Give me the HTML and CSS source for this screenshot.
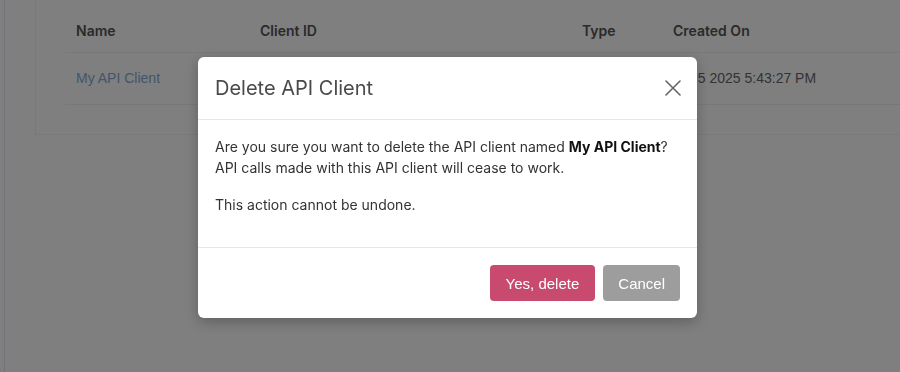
FILE: index.html
```html
<!DOCTYPE html>
<html lang="en">
<head>
<meta charset="utf-8">
<title>Delete API Client</title>
<link rel="stylesheet" href="styles.css">
</head>
<body>
<div class="app">
  <aside class="sidebar"></aside>
  <main class="content">
    <section class="card">
      <table class="clients">
        <colgroup>
          <col class="c-name"><col class="c-id"><col class="c-type"><col>
        </colgroup>
        <thead>
          <tr><th>Name</th><th>Client ID</th><th>Type</th><th>Created On</th></tr>
        </thead>
        <tbody>
          <tr>
            <td><a class="link" href="#">My API Client</a></td>
            <td></td>
            <td></td>
            <td class="date">Aug 5 2025 5:43:27 PM</td>
          </tr>
        </tbody>
      </table>
    </section>
  </main>
</div>

<div class="overlay">
  <div class="modal" role="dialog" aria-labelledby="modal-title">
    <header class="modal-header">
      <h2 id="modal-title" class="modal-title">Delete API Client</h2>
      <button class="close" aria-label="Close">
        <svg width="16" height="16" viewBox="0 0 16 16" aria-hidden="true">
          <path d="M1 1 L15 15 M15 1 L1 15" stroke="#666" stroke-width="1.6" fill="none" stroke-linecap="round"/>
        </svg>
      </button>
    </header>
    <div class="modal-body">
      <p>Are you sure you want to delete the API client named <strong>My API Client</strong>? API calls made with this API client will cease to work.</p>
      <p>This action cannot be undone.</p>
    </div>
    <footer class="modal-footer">
      <button class="btn btn-danger">Yes, delete</button>
      <button class="btn btn-cancel">Cancel</button>
    </footer>
  </div>
</div>
</body>
</html>
```

FILE: styles.css
```css
* { box-sizing: border-box; }

html, body {
  margin: 0;
  height: 100%;
  background: #ffffff;
  font-family: Inter, "Noto Sans", "Liberation Sans", sans-serif;
  color: #333;
  overflow: hidden;
}

.app {
  display: flex;
  height: 100%;
}

.sidebar {
  width: 5px;
  flex: none;
  border-right: 1px solid #e6e6f6;
}

.content {
  flex: 1;
  padding-left: 30px;
}

.card {
  border: 1px solid #f2f2f2;
  border-top: none;
  border-right: none;
  padding: 10px 0 29px 29px;
}

.clients {
  width: 100%;
  border-collapse: collapse;
  font-size: 14px;
}

.c-name { width: 184px; }
.c-id { width: 322px; }
.c-type { width: 91px; }

.clients th {
  text-align: left;
  font-weight: 600;
  color: #555;
  padding: 0 11px;
  height: 42px;
  border-bottom: 1px solid #f0f0f0;
}

.clients td {
  padding: 0 11px;
  height: 52px;
  border-bottom: 1px solid #f0f0f0;
  font-family: "Liberation Sans", Arial, sans-serif;
  color: #666;
  font-size: 14px;
  white-space: nowrap;
}

.clients .date { padding-left: 7px; }

.link {
  color: #86aad6;
  text-decoration: none;
}

.overlay {
  position: fixed;
  inset: 0;
  background: rgba(0, 0, 0, 0.5);
  display: flex;
  align-items: flex-start;
}

.modal {
  margin: 57px 0 0 198px;
  width: 499px;
  background: #fff;
  border-radius: 6px;
  box-shadow: 0 4px 14px rgba(0, 0, 0, 0.25);
}

.modal-header {
  height: 63px;
  padding: 0 16px 0 17px;
  display: flex;
  align-items: center;
  justify-content: space-between;
  border-bottom: 1px solid #e6e6e6;
}

.modal-title {
  margin: 0;
  font-size: 20px;
  font-weight: 400;
  color: #4a4a4a;
}

.close {
  border: none;
  background: none;
  padding: 0;
  width: 16px;
  height: 16px;
  display: flex;
  cursor: pointer;
}

.modal-body {
  padding: 16px 17px 0;
  font-size: 14px;
  line-height: 21px;
  color: #333;
  border-bottom: 1px solid #e6e6e6;
}

.modal-body p {
  margin: 0 0 16px;
}

.modal-body p:last-child {
  margin-bottom: 32px;
}

.modal-body strong {
  font-weight: 700;
  color: #111;
}

.modal-footer {
  display: flex;
  justify-content: flex-end;
  gap: 8px;
  padding: 17px 17px 17px;
}

.btn {
  height: 36px;
  border: none;
  border-radius: 4px;
  padding: 0 15px;
  font-family: "Liberation Sans", Arial, sans-serif;
  font-size: 15px;
  color: #fff;
  cursor: pointer;
}

.btn-danger { background: #c84b6f; padding: 0 16px; }
.btn-cancel { background: #9d9d9d; }
```
